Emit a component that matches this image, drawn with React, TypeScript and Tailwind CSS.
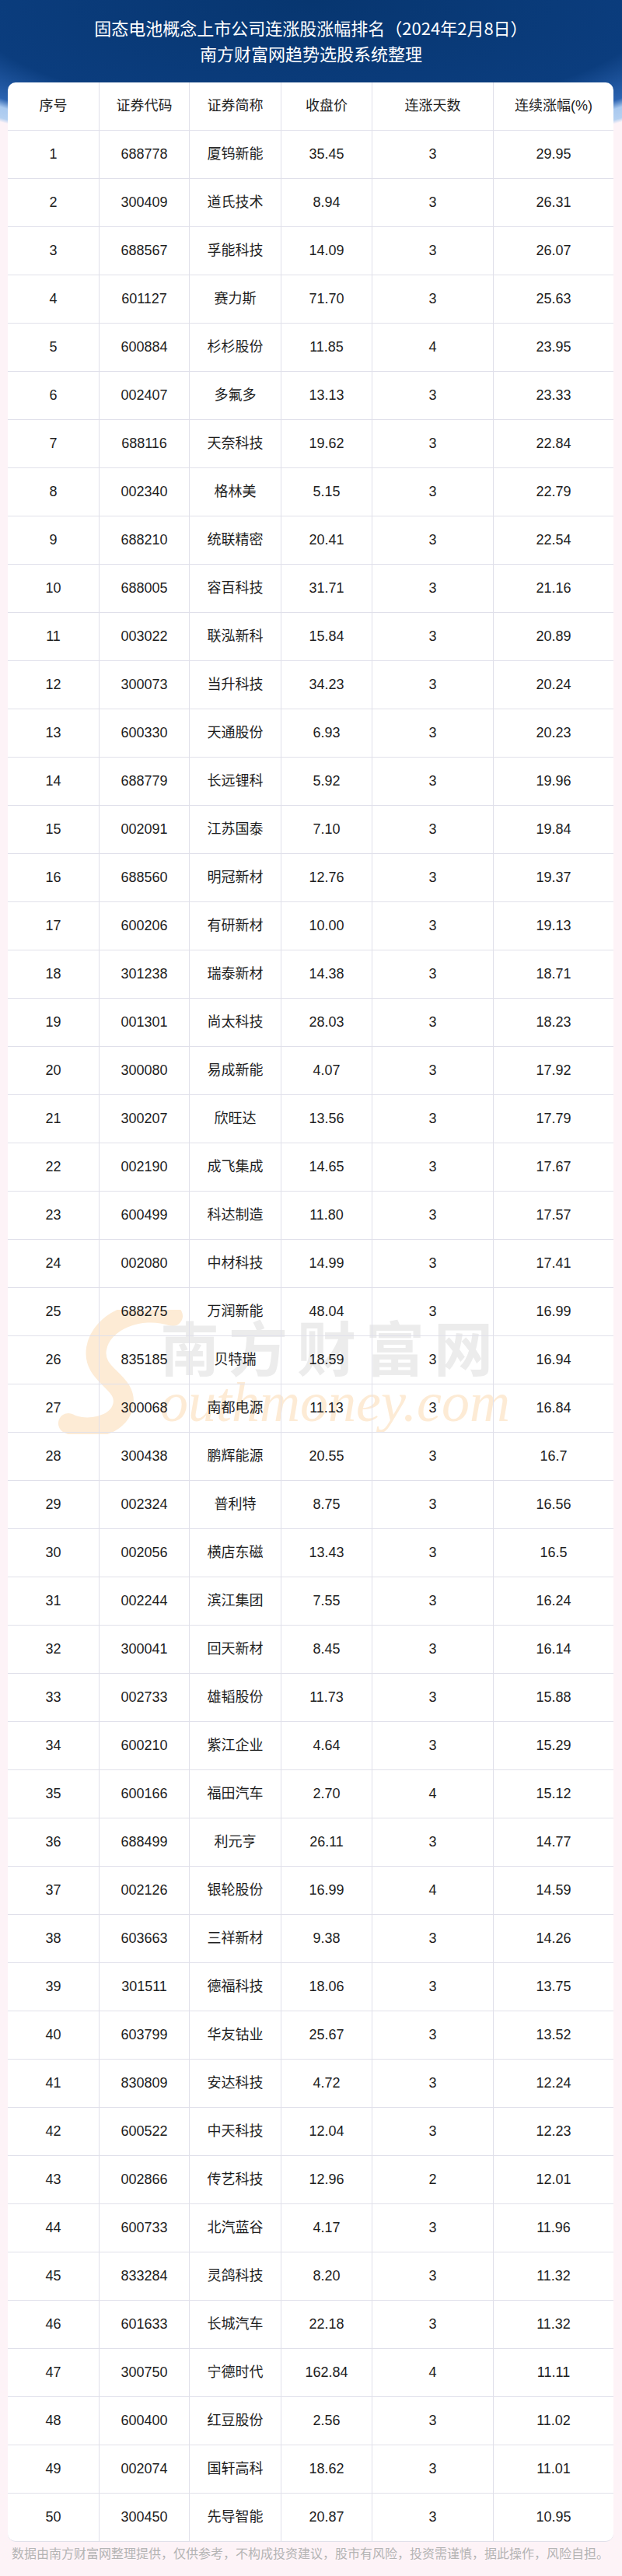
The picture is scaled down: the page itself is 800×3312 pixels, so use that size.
import React from "react";

type Row = [string, string, string, string, string];

const rows: Row[] = [
  ["688778", "厦钨新能", "35.45", "3", "29.95"],
  ["300409", "道氏技术", "8.94", "3", "26.31"],
  ["688567", "孚能科技", "14.09", "3", "26.07"],
  ["601127", "赛力斯", "71.70", "3", "25.63"],
  ["600884", "杉杉股份", "11.85", "4", "23.95"],
  ["002407", "多氟多", "13.13", "3", "23.33"],
  ["688116", "天奈科技", "19.62", "3", "22.84"],
  ["002340", "格林美", "5.15", "3", "22.79"],
  ["688210", "统联精密", "20.41", "3", "22.54"],
  ["688005", "容百科技", "31.71", "3", "21.16"],
  ["003022", "联泓新科", "15.84", "3", "20.89"],
  ["300073", "当升科技", "34.23", "3", "20.24"],
  ["600330", "天通股份", "6.93", "3", "20.23"],
  ["688779", "长远锂科", "5.92", "3", "19.96"],
  ["002091", "江苏国泰", "7.10", "3", "19.84"],
  ["688560", "明冠新材", "12.76", "3", "19.37"],
  ["600206", "有研新材", "10.00", "3", "19.13"],
  ["301238", "瑞泰新材", "14.38", "3", "18.71"],
  ["001301", "尚太科技", "28.03", "3", "18.23"],
  ["300080", "易成新能", "4.07", "3", "17.92"],
  ["300207", "欣旺达", "13.56", "3", "17.79"],
  ["002190", "成飞集成", "14.65", "3", "17.67"],
  ["600499", "科达制造", "11.80", "3", "17.57"],
  ["002080", "中材科技", "14.99", "3", "17.41"],
  ["688275", "万润新能", "48.04", "3", "16.99"],
  ["835185", "贝特瑞", "18.59", "3", "16.94"],
  ["300068", "南都电源", "11.13", "3", "16.84"],
  ["300438", "鹏辉能源", "20.55", "3", "16.7"],
  ["002324", "普利特", "8.75", "3", "16.56"],
  ["002056", "横店东磁", "13.43", "3", "16.5"],
  ["002244", "滨江集团", "7.55", "3", "16.24"],
  ["300041", "回天新材", "8.45", "3", "16.14"],
  ["002733", "雄韬股份", "11.73", "3", "15.88"],
  ["600210", "紫江企业", "4.64", "3", "15.29"],
  ["600166", "福田汽车", "2.70", "4", "15.12"],
  ["688499", "利元亨", "26.11", "3", "14.77"],
  ["002126", "银轮股份", "16.99", "4", "14.59"],
  ["603663", "三祥新材", "9.38", "3", "14.26"],
  ["301511", "德福科技", "18.06", "3", "13.75"],
  ["603799", "华友钴业", "25.67", "3", "13.52"],
  ["830809", "安达科技", "4.72", "3", "12.24"],
  ["600522", "中天科技", "12.04", "3", "12.23"],
  ["002866", "传艺科技", "12.96", "2", "12.01"],
  ["600733", "北汽蓝谷", "4.17", "3", "11.96"],
  ["833284", "灵鸽科技", "8.20", "3", "11.32"],
  ["601633", "长城汽车", "22.18", "3", "11.32"],
  ["300750", "宁德时代", "162.84", "4", "11.11"],
  ["600400", "红豆股份", "2.56", "3", "11.02"],
  ["002074", "国轩高科", "18.62", "3", "11.01"],
  ["300450", "先导智能", "20.87", "3", "10.95"],
];

const headers = ["序号", "证券代码", "证券简称", "收盘价", "连涨天数", "连续涨幅(%)"];

const gridCols = "grid grid-cols-[117px_116px_118px_117px_156px_155px]";

function Watermark() {
  return (
    <div className="absolute left-[60px] top-[1578px] z-0 pointer-events-none select-none">
      <div className="flex items-start">
        <svg width="170" height="160" viewBox="0 0 170 160" className="mt-[0px]">
          <path
            d="M152 8 C 110 -6, 60 14, 54 50 C 48 86, 96 92, 88 124 C 82 150, 40 158, 18 146"
            fill="none"
            stroke="#fdebd5"
            strokeWidth="26"
            strokeLinecap="round"
          />
        </svg>
        <div className="-ml-[34px] flex flex-col">
          <div className="mt-[8px] text-[76px] leading-[76px] tracking-[12px] font-bold text-[#ececec] font-['Noto_Sans_CJK_SC',sans-serif] whitespace-nowrap">
            南方财富网
          </div>
          <div className="-mt-[1px] text-[72px] leading-[72px] italic text-[#fdebd5] font-['Liberation_Serif',serif] whitespace-nowrap">
            outhmoney.com
          </div>
        </div>
      </div>
    </div>
  );
}

export default function App() {
  return (
    <div className="w-[800px] h-[3312px] overflow-hidden bg-[#fdf3f7] bg-[radial-gradient(ellipse_620px_205px_at_50%_0,#073670_0%,#0b3d7e_72%,#2a62b0_89%,#a9c9ef_93%,#b4d0f1_98%,rgba(253,243,247,0)_100%)] bg-no-repeat font-['Liberation_Sans','Noto_Sans_CJK_SC',sans-serif]">
      <div className="pt-[19px] text-center text-white text-[22px] leading-[33px] font-['Noto_Sans_CJK_SC',sans-serif]">
        <div>固态电池概念上市公司连涨股涨幅排名（2024年2月8日）</div>
        <div>南方财富网趋势选股系统整理</div>
      </div>

      <div className="relative mt-[21px] mx-[10px] w-[779px] bg-white rounded-[10px] overflow-hidden border-b border-[#e0e0ea] text-[#1e1e1e] text-[18px]">
        <Watermark />
        <div className="relative z-10">
          <div className={`${gridCols} h-[61px]`}>
            {headers.map((h, i) => (
              <div
                key={h}
                className={`flex items-center justify-center ${i > 0 ? "border-l border-[#e0e0ea]" : ""}`}
              >
                {h}
              </div>
            ))}
          </div>
          {rows.map((r, idx) => {
            const cells = [String(idx + 1), ...r];
            return (
              <div key={idx} className={`${gridCols} h-[62px] border-t border-[#e0e0ea]`}>
                {cells.map((c, i) => (
                  <div
                    key={i}
                    className={`flex items-center justify-center ${i > 0 ? "border-l border-[#e0e0ea]" : ""}`}
                  >
                    {c}
                  </div>
                ))}
              </div>
            );
          })}
        </div>
      </div>

      <div className="px-[15px] leading-[32px] text-[16px] text-[#b4b4b4] whitespace-nowrap">
        数据由南方财富网整理提供，仅供参考，不构成投资建议，股市有风险，投资需谨慎，据此操作，风险自担。
      </div>
    </div>
  );
}
